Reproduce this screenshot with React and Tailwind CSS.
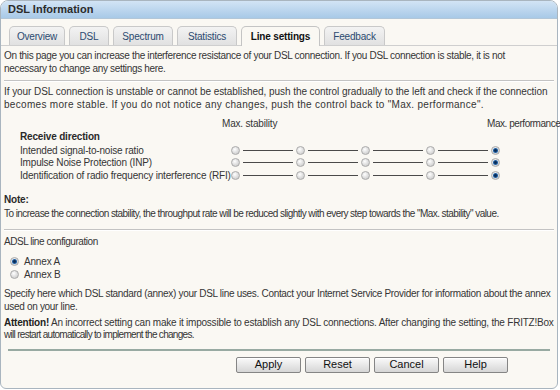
const tabs = [
  { label: "Overview", w: "w-[56px]" },
  { label: "DSL", w: "w-[40px]" },
  { label: "Spectrum", w: "w-[60px]" },
  { label: "Statistics", w: "w-[60px]" },
  { label: "Line settings", w: "w-[79px]", active: true },
  { label: "Feedback", w: "w-[61px]" },
]

const rows = [
  "Intended signal-to-noise ratio",
  "Impulse Noise Protection (INP)",
  "Identification of radio frequency interference (RFI)",
]

function Radio({ checked }) {
  return (
    <span className="flex w-[9px] h-[9px] shrink-0 items-center justify-center rounded-full border border-[#ababab] bg-[radial-gradient(circle_at_40%_35%,#ffffff_0%,#e2e2e2_45%,#c4c4c4_100%)]">
      {checked && (
        <span className="w-[5px] h-[5px] rounded-full bg-[radial-gradient(circle,#0a2c55_25%,#2a78c8_75%)]" />
      )}
    </span>
  )
}

function Button({ children }) {
  return (
    <button className="w-[65px] h-[16px] rounded-[2px] border border-[#858585] bg-gradient-to-b from-[#fafafa] to-[#d6d6d6] text-[11px] leading-none tracking-normal text-[#111] shadow-[inset_0_1px_0_#ffffff]">
      {children}
    </button>
  )
}

export default function App() {
  return (
    <div className="w-[560px] h-[390px] overflow-hidden bg-white font-['Liberation_Sans',Arial,sans-serif] text-[10px] leading-[13px] tracking-[-0.18px] text-[#353535]">
      <div className="w-[558px] h-[389px] flex flex-col rounded-t-[8px] rounded-b-[6px] border border-[#a9b5bf] bg-[#faf8f3]">
        <div className="h-[18px] shrink-0 flex items-center rounded-t-[7px] border-b border-[#b2c6d8] bg-gradient-to-b from-[#d2e4f5] to-[#a8c9e7] pl-[7px]">
          <span className="text-[11px] font-bold tracking-normal text-[#2b2b2b]">DSL Information</span>
        </div>

        <div className="flex items-end gap-[4px] pl-[8px] pt-[7px] border-b border-[#cfcfcf] h-[27px] shrink-0">
          {tabs.map((t) =>
            t.active ? (
              <div
                key={t.label}
                className={`${t.w} h-[20px] -mb-[1px] flex items-center justify-center rounded-t-[5px] border border-b-0 border-[#c4c4c4] bg-[#faf8f3] font-bold text-[#111]`}
              >
                {t.label}
              </div>
            ) : (
              <div
                key={t.label}
                className={`${t.w} h-[19px] flex items-center justify-center rounded-t-[5px] border border-b-0 border-[#c9c9c9] bg-gradient-to-b from-[#f3f3f3] to-[#e1e1e1] text-[#2c4a70]`}
              >
                {t.label}
              </div>
            )
          )}
        </div>

        <div className="flex flex-col px-[3px] whitespace-nowrap">
          <p className="mt-[3px] tracking-[-0.33px]">
            On this page you can increase the interference resistance of your DSL connection. If you DSL connection is stable, it is not
            <br />
            necessary to change any settings here.
          </p>
          <div className="mt-[5px] h-[2px] border-t border-[#c3c3c3] bg-white" />

          <p className="mt-[3px] tracking-[-0.06px]">
            If your DSL connection is unstable or cannot be established, push the control gradually to the left and check if the connection
            <br />
            <span className="tracking-[0.3px]">becomes more stable. If you do not notice any changes, push the control back to "Max. performance".</span>
          </p>

          <div className="mt-[6px] flex pl-[218px]">
            <span className="w-[265px] shrink-0">Max. stability</span>
            <span className="shrink-0 tracking-[-0.45px]">Max. performance</span>
          </div>

          <div className="pl-[16px]">
            <div className="mb-[1px] font-bold text-[#2a2a2a]">Receive direction</div>
            {rows.map((label) => (
              <div key={label} className="flex items-center h-[12.5px]">
                <span className="w-[211px] shrink-0">{label}</span>
                {[0, 1, 2, 3, 4].map((i) => (
                  <div key={i} className="flex items-center">
                    <Radio checked={i === 4} />
                    {i < 4 && <span className="mx-[3px] w-[50px] h-[1px] bg-[#4a4a4a]" />}
                  </div>
                ))}
              </div>
            ))}
          </div>

          <div className="mt-[11px] font-bold text-[#2a2a2a]">Note:</div>
          <p className="mt-[1px] tracking-[-0.55px]">
            To increase the connection stability, the throughput rate will be reduced slightly with every step towards the "Max. stability" value.
          </p>
          <div className="mt-[9px] h-[2px] border-t border-[#c3c3c3] bg-white" />

          <div className="mt-[4px] tracking-[-0.45px]">ADSL line configuration</div>
          <div className="mt-[7px] pl-[6px] flex flex-col">
            <label className="flex items-center gap-[5px] h-[13.5px]">
              <Radio checked />
              <span>Annex A</span>
            </label>
            <label className="flex items-center gap-[5px] h-[13.5px]">
              <Radio />
              <span>Annex B</span>
            </label>
          </div>

          <p className="mt-[5px] tracking-[-0.31px]">
            Specify here which DSL standard (annex) your DSL line uses. Contact your Internet Service Provider for information about the annex
            <br />
            used on your line.
          </p>
          <p className="mt-[4px] leading-[12.5px] tracking-[-0.22px]">
            <span className="font-bold text-[#222]">Attention!</span> An incorrect setting can make it impossible to establish any DSL connections. After changing the setting, the FRITZ!Box
            <br />
            <span className="tracking-[-0.7px]">will restart automatically to implement the changes.</span>
          </p>

          <div className="mt-[7px] mx-[4px] h-[2px] bg-[#98aaa2]" />

          <div className="mt-[6px] flex justify-end gap-[4px] pr-[46px]">
            <Button>Apply</Button>
            <Button>Reset</Button>
            <Button>Cancel</Button>
            <Button>Help</Button>
          </div>
        </div>
      </div>
    </div>
  )
}
